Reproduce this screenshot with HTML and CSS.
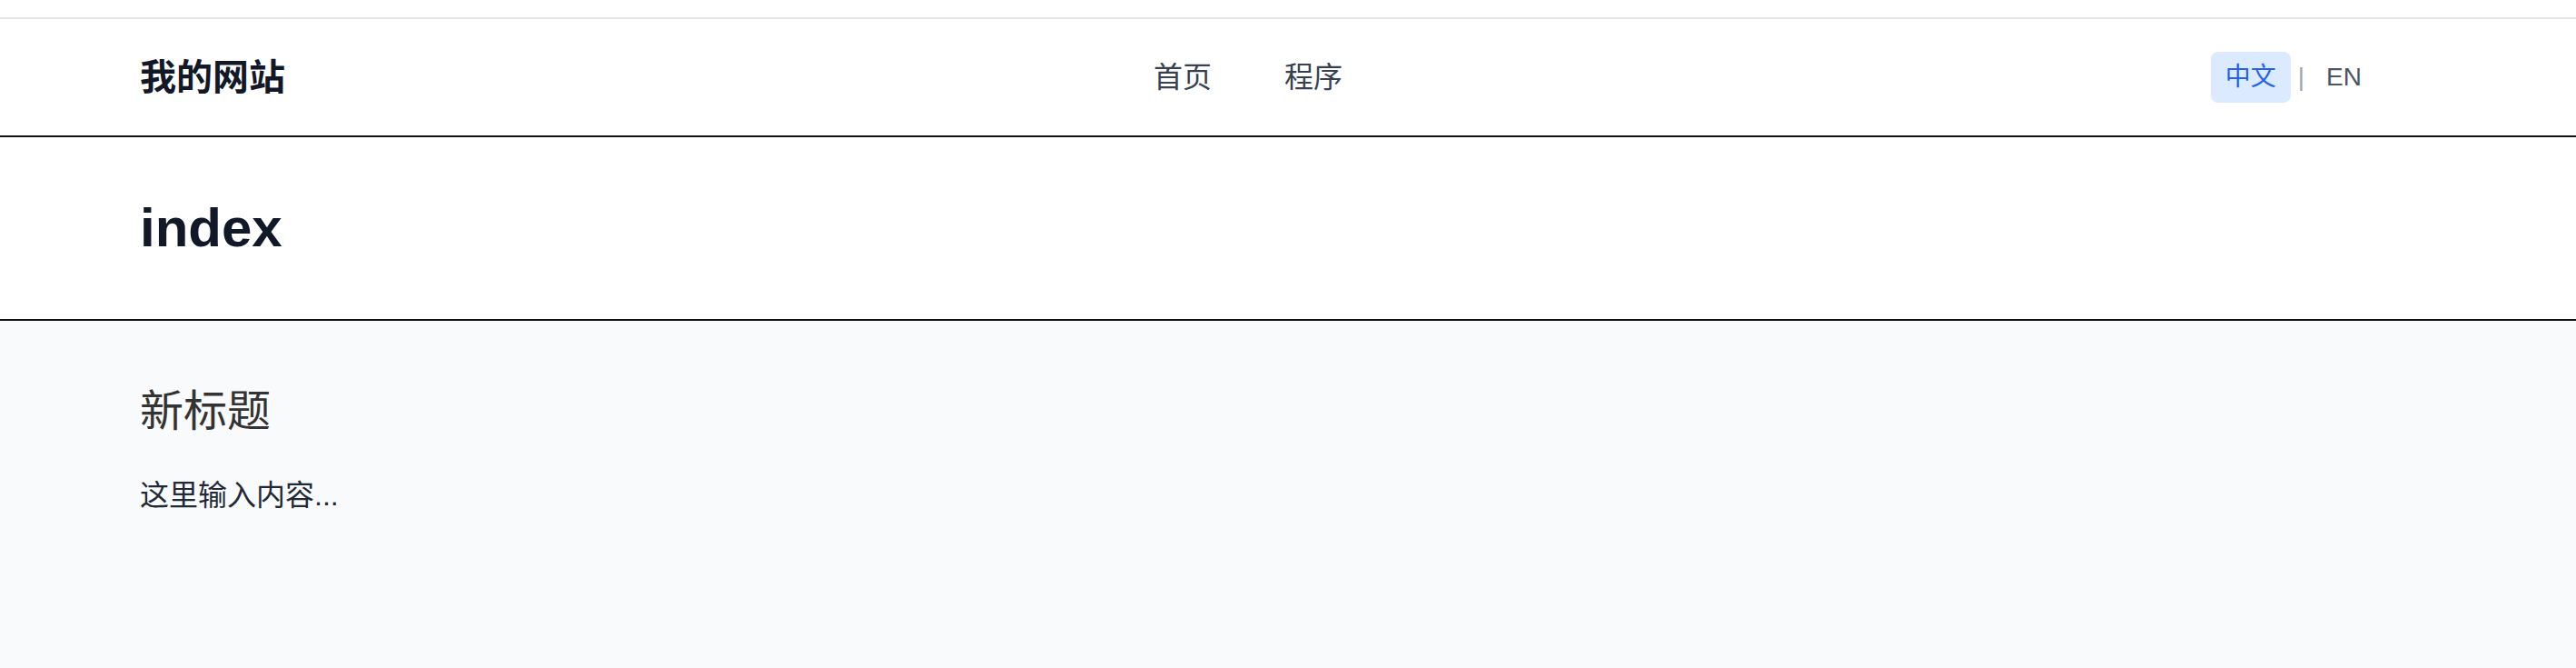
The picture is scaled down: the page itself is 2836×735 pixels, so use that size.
FILE: index.html
```html
<!DOCTYPE html>
<html lang="zh-CN">
<head>
<meta charset="utf-8">
<title>index</title>
<link rel="stylesheet" href="styles.css">
</head>
<body>
<div class="page">
  <header class="site-header">
    <div class="header-inner">
      <a class="logo" href="#">我的网站</a>
      <nav class="main-nav">
        <a href="#">首页</a>
        <a href="#">程序</a>
      </nav>
      <div class="lang">
        <a class="lang-item active" href="#">中文</a>
        <span class="lang-sep">|</span>
        <a class="lang-item" href="#">EN</a>
      </div>
    </div>
  </header>
  <section class="page-title">
    <h1>index</h1>
  </section>
  <main class="content">
    <h2>新标题</h2>
    <p>这里输入内容...</p>
  </main>
</div>
</body>
</html>
```

FILE: styles.css
```css
html, body {
  margin: 0;
  padding: 0;
  height: 100%;
}
body {
  font-family: "Liberation Sans", "Noto Sans CJK SC", sans-serif;
  background: #f9fafb;
}
a {
  text-decoration: none;
}
.page {
  min-height: 100%;
  display: flex;
  flex-direction: column;
  background: #ffffff;
  padding-top: 19px;
  box-sizing: border-box;
}
.site-header {
  background: #ffffff;
  border-top: 2px solid #e5e5e5;
  border-bottom: 2px solid #111111;
}
.header-inner {
  height: 128px;
  padding: 0 220px 0 154px;
  display: flex;
  align-items: center;
  justify-content: space-between;
}
.logo {
  font-size: 40px;
  font-weight: 700;
  color: #111827;
  line-height: 56px;
}
.main-nav {
  display: flex;
  gap: 80px;
}
.main-nav a {
  font-size: 32px;
  line-height: 48px;
  color: #374151;
}
.lang {
  display: flex;
  align-items: center;
  gap: 8px;
}
.lang-item {
  font-size: 28px;
  line-height: 40px;
  padding: 8px 16px;
  border-radius: 8px;
  color: #4b5563;
}
.lang-item.active {
  background: #dbeafe;
  color: #2563eb;
}
.lang-sep {
  font-size: 28px;
  line-height: 40px;
  color: #9ca3af;
}
.page-title {
  background: #ffffff;
  border-bottom: 2px solid #111111;
  padding: 64px 154px;
}
.page-title h1 {
  margin: 0;
  font-size: 60px;
  line-height: 72px;
  font-weight: 700;
  color: #111827;
}
.content {
  flex: 1;
  background: #f9fafb;
  padding: 64px 154px;
}
.content h2 {
  margin: 0 0 32px;
  font-size: 48px;
  line-height: 72px;
  font-weight: 400;
  color: #333333;
}
.content p {
  margin: 0;
  font-size: 32px;
  line-height: 48px;
  color: #1f2937;
}
```
